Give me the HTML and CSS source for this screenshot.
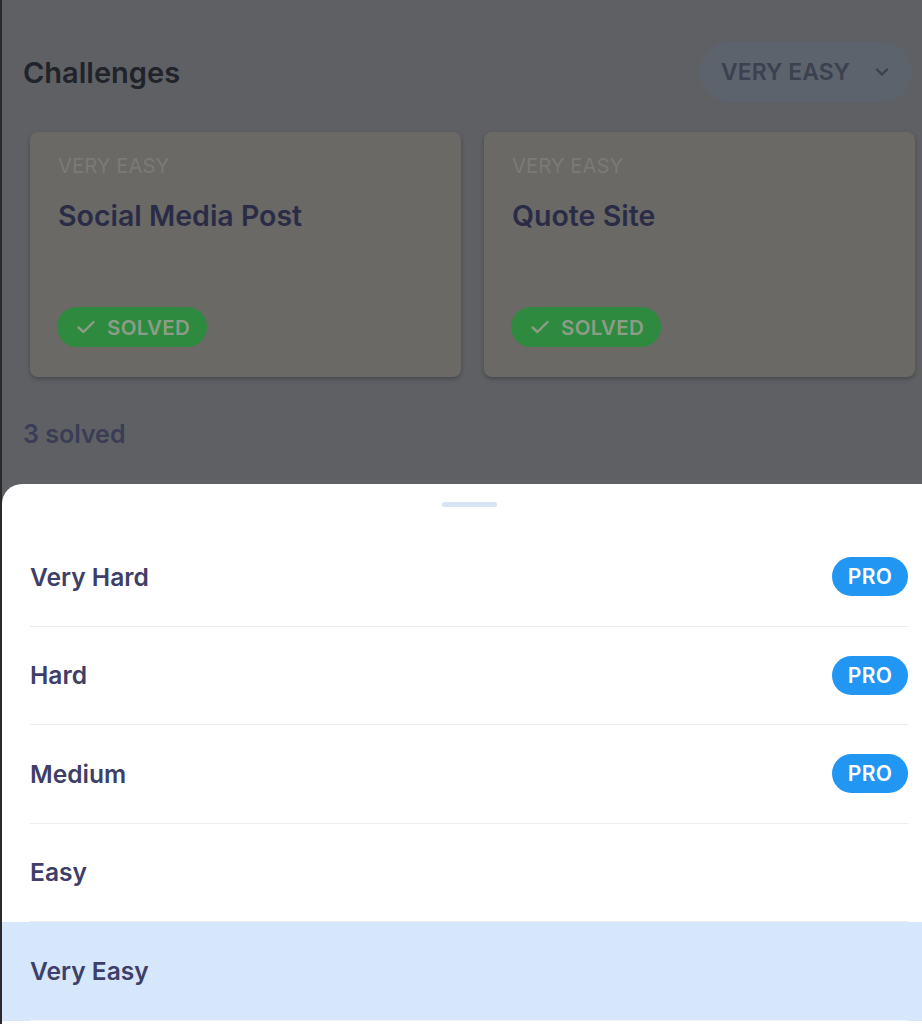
FILE: index.html
```html
<!DOCTYPE html>
<html lang="en">
<head>
<meta charset="utf-8">
<title>Challenges</title>
<link rel="stylesheet" href="styles.css">
</head>
<body>
<div class="app">
  <header class="header">
    <h1 class="title">Challenges</h1>
    <button class="dropdown">
      <span>VERY EASY</span>
      <svg class="chev" width="14" height="10" viewBox="0 0 14 10"><path d="M2 2.5 L7 7.5 L12 2.5" fill="none" stroke="#3b4150" stroke-width="2.4" stroke-linecap="round" stroke-linejoin="round"/></svg>
    </button>
  </header>

  <section class="cards">
    <article class="card">
      <div class="card-level">VERY EASY</div>
      <h2 class="card-title">Social Media Post</h2>
      <div class="solved">
        <svg width="20" height="16" viewBox="0 0 20 16"><path d="M2.5 8.5 L7.5 13 L17.5 3" fill="none" stroke="#8d9c88" stroke-width="2.4" stroke-linecap="round" stroke-linejoin="round"/></svg>
        <span>SOLVED</span>
      </div>
    </article>
    <article class="card">
      <div class="card-level">VERY EASY</div>
      <h2 class="card-title">Quote Site</h2>
      <div class="solved">
        <svg width="20" height="16" viewBox="0 0 20 16"><path d="M2.5 8.5 L7.5 13 L17.5 3" fill="none" stroke="#8d9c88" stroke-width="2.4" stroke-linecap="round" stroke-linejoin="round"/></svg>
        <span>SOLVED</span>
      </div>
    </article>
  </section>

  <p class="count">3 solved</p>

  <div class="sheet">
    <div class="handle"></div>
    <ul class="options">
      <li class="option"><div class="option-inner"><span>Very Hard</span><span class="pro">PRO</span></div></li>
      <li class="option"><div class="option-inner"><span>Hard</span><span class="pro">PRO</span></div></li>
      <li class="option"><div class="option-inner"><span>Medium</span><span class="pro">PRO</span></div></li>
      <li class="option"><div class="option-inner"><span>Easy</span></div></li>
      <li class="option selected"><div class="option-inner"><span>Very Easy</span></div></li>
    </ul>
  </div>
</div>
</body>
</html>
```

FILE: styles.css
```css
* { box-sizing: border-box; }

html, body {
  margin: 0;
  padding: 0;
  background: #2a2a2b;
  font-family: "Inter", "Open Sans", sans-serif;
}

.app {
  position: relative;
  margin-left: 2px;
  height: 1024px;
  background: #5f6064;
  overflow: hidden;
}

.header {
  display: flex;
  justify-content: space-between;
  align-items: center;
  padding: 42px 10px 0 21px;
  height: 102px;
}

.title {
  margin: 0;
  font-size: 29px;
  font-weight: 600;
  color: #202329;
}

.dropdown {
  display: flex;
  align-items: center;
  gap: 25px;
  height: 60px;
  padding: 0 23px 0 21px;
  border: none;
  border-radius: 30px;
  background: #5d636c;
  font-family: inherit;
  font-size: 23px;
  font-weight: 600;
  color: #3b4150;
}

.cards {
  display: grid;
  grid-template-columns: 431px 431px;
  gap: 23px;
  margin-top: 30px;
  padding-left: 28px;
}

.card {
  height: 245px;
  padding: 23px 28px 0 28px;
  background: #6a6966;
  border-radius: 8px;
  box-shadow: 0 2px 4px rgba(0, 0, 0, 0.25);
  display: flex;
  flex-direction: column;
}

.card-level {
  font-size: 20.3px;
  color: #7b7a77;
  line-height: 22px;
}

.card-title {
  margin: 23px 0 0 0;
  font-size: 28.5px;
  font-weight: 600;
  color: #2a2c47;
  line-height: 32px;
}

.solved {
  margin-top: auto;
  margin-bottom: 30px;
  align-self: flex-start;
  display: flex;
  align-items: center;
  gap: 11px;
  height: 40px;
  padding: 0 17px 0 19px;
  border-radius: 20px;
  background: #2e8a3e;
  font-size: 20.5px;
  font-weight: 600;
  letter-spacing: 0.3px;
  color: #8d9c88;
  margin-left: -1px;
}

.count {
  margin: 42px 0 0 21px;
  font-size: 25px;
  font-weight: 600;
  color: #3a3d55;
}

.sheet {
  position: absolute;
  left: 0;
  right: 0;
  bottom: 0;
  height: 540px;
  background: #ffffff;
  border-radius: 20px 0 0 0;
  padding-top: 18px;
}

.handle {
  width: 55px;
  height: 5px;
  margin: 0 auto 21px auto;
  border-radius: 3px;
  background: #d6e4f5;
  position: relative;
  left: 7px;
}

.options {
  list-style: none;
  margin: 0;
  padding: 0;
}

.option {
  padding: 0 14px 0 28px;
}

.option-inner {
  display: flex;
  align-items: center;
  justify-content: space-between;
  height: 98.5px;
  border-bottom: 1px solid #ececef;
  font-size: 24.6px;
  font-weight: 600;
  color: #3e3f68;
}

.option.selected {
  background: #d6e6fb;
}

.option.selected .option-inner {
  border-bottom-color: #eef3fa;
}

.pro {
  display: flex;
  align-items: center;
  justify-content: center;
  width: 76px;
  height: 39px;
  border-radius: 20px;
  background: #2196f3;
  color: #ffffff;
  font-size: 21px;
  font-weight: 600;
  letter-spacing: 0.3px;
}
```
